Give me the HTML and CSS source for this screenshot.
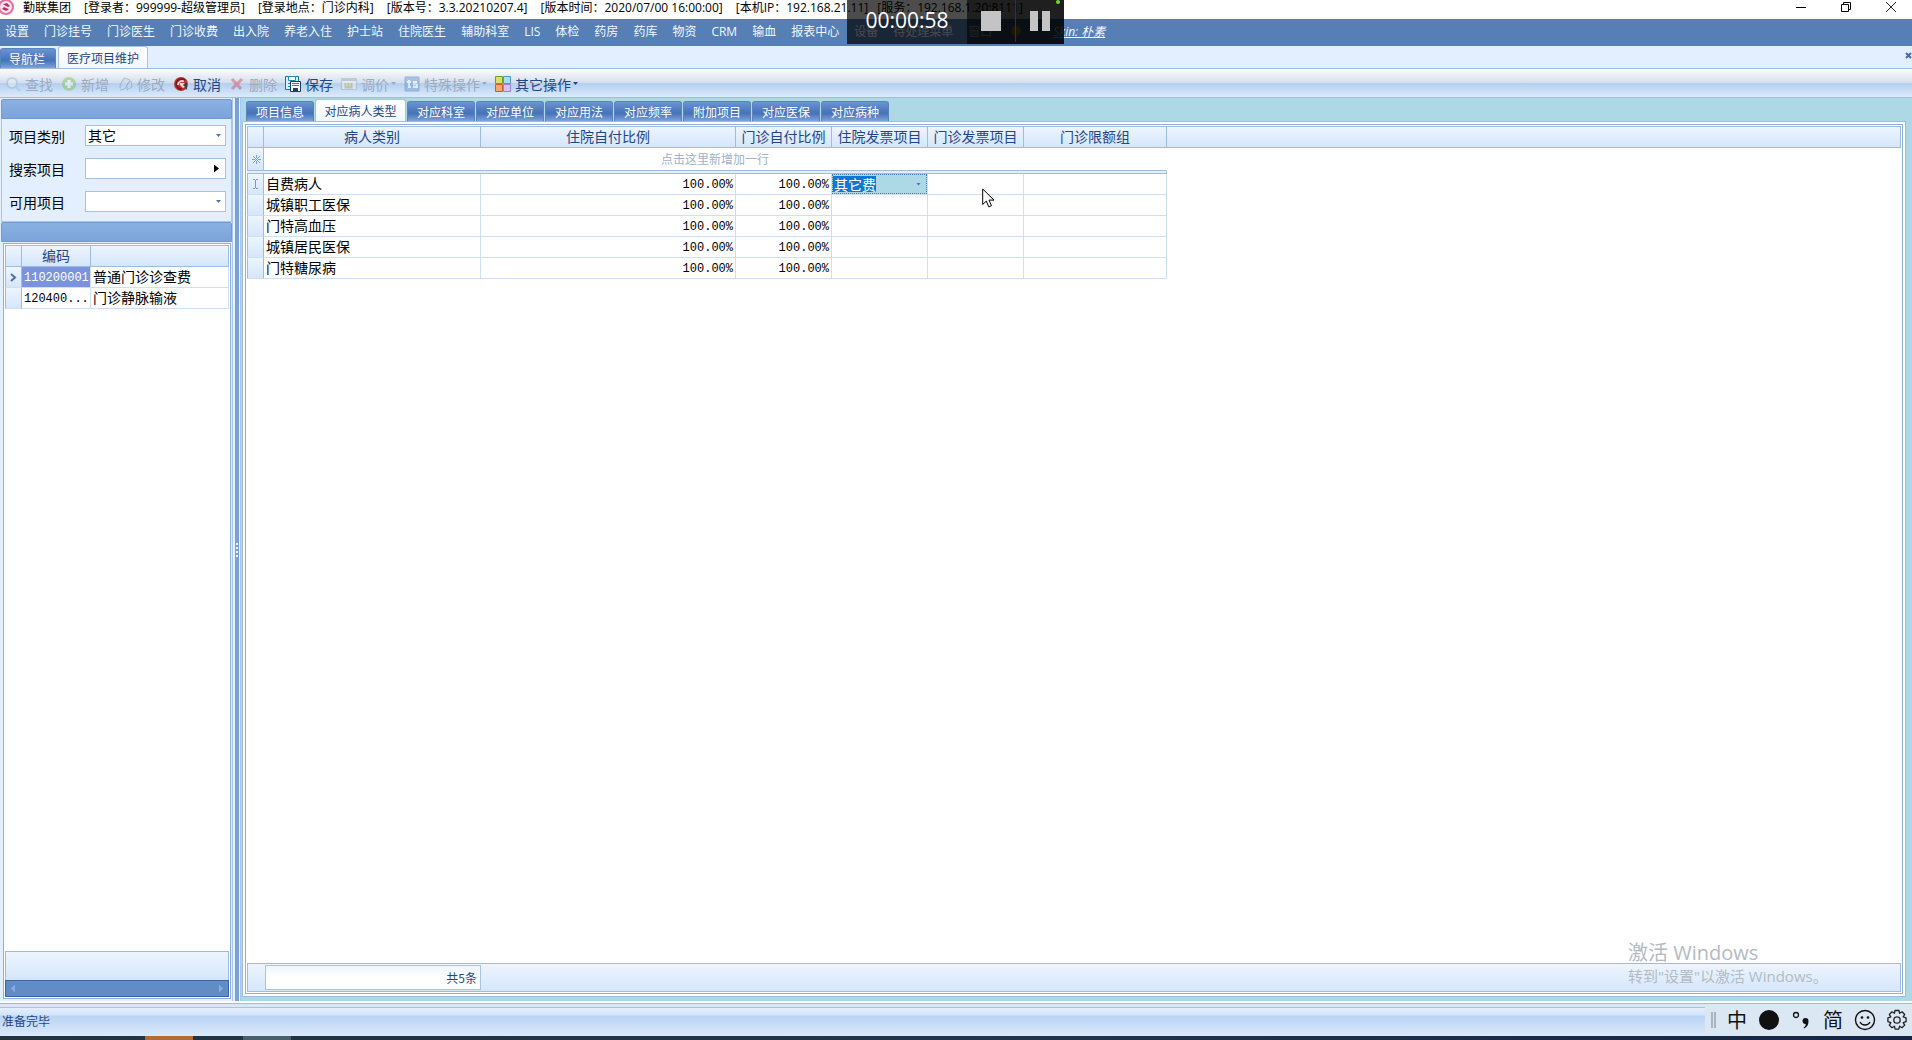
FILE: index.html
```html
<!DOCTYPE html>
<html lang="zh-CN">
<head>
<meta charset="utf-8">
<title>勤联集团</title>
<link rel="stylesheet" href="styles.css">
</head>
<body>
<header class="titlebar">
  <svg class="logo" width="14" height="19" viewBox="0 0 14 19"><circle cx="6" cy="7" r="7" fill="#fbe6ee" stroke="#e0709a" stroke-width="2"/><path d="M3 4l4-1 3 3-2 1-2-1zM9 9l-3 2-4-2 2-2 2 1z" fill="#b8306a"/></svg>
  <div class="title-text"><span>勤联集团</span><span>[登录者：999999-超级管理员]</span><span>[登录地点：门诊内科]</span><span>[版本号：3.3.20210207.4]</span><span>[版本时间：2020/07/00 16:00:00]</span><span>[本机IP：192.168.21.11]</span><span class="tight">[服务：192.168.1.20:8111]</span></div>
  <div class="window-buttons">
    <button type="button" aria-label="最小化"><svg width="12" height="12" viewBox="0 0 12 12"><path d="M1 6.500h10" stroke="#000"/></svg></button>
    <button type="button" aria-label="还原"><svg width="12" height="12" viewBox="0 0 12 12"><path d="M1.500 3.500h7v7h-7zM3.500 3.500v-2h7v7h-2" fill="none" stroke="#000"/></svg></button>
    <button type="button" aria-label="关闭"><svg width="12" height="12" viewBox="0 0 12 12"><path d="M1 1l10 10M11 1L1 11" stroke="#222"/></svg></button>
  </div>
</header>

<nav class="menubar">
  <a href="#">设置</a><a href="#">门诊挂号</a><a href="#">门诊医生</a><a href="#">门诊收费</a><a href="#">出入院</a><a href="#">养老入住</a><a href="#">护士站</a><a href="#">住院医生</a><a href="#">辅助科室</a><a href="#">LIS</a><a href="#">体检</a><a href="#">药房</a><a href="#">药库</a><a href="#">物资</a><a href="#">CRM</a><a href="#">输血</a><a href="#">报表中心</a><a href="#">设备</a><a href="#">待处理菜单</a><a href="#">窗口</a>
  <svg class="bulb" width="14" height="14" viewBox="0 0 14 14"><circle cx="7" cy="6" r="5" fill="#f0b840"/><path d="M5 11h4v2H5z" fill="#888"/></svg>
  <a class="skin" href="#">Skin: 朴素</a>
</nav>

<div class="doc-tabs">
  <button class="tab" type="button">导航栏</button>
  <button class="tab active" type="button">医疗项目维护</button>
  <button class="doc-close" type="button" aria-label="关闭页面"><svg width="7" height="7" viewBox="0 0 7 7"><path d="M1 1l5 5M6 1L1 6" stroke="#3d6cb4" stroke-width="2"/></svg></button>
</div>

<div class="toolbar">
  <button type="button" disabled><svg width="16" height="16" viewBox="0 0 16 16"><circle cx="7" cy="7" r="5" fill="#e8f1fa" stroke="#9db8d4" stroke-width="2"/><path d="M11 11l4 4" stroke="#9db8d4" stroke-width="2"/></svg>查找</button>
  <button type="button" disabled><svg width="16" height="16" viewBox="0 0 16 16"><circle cx="8" cy="8" r="7" fill="#7cc04a"/><path d="M8 4v8M4 8h8" stroke="#fff" stroke-width="3"/></svg>新增</button>
  <button type="button" disabled><svg width="16" height="16" viewBox="0 0 16 16"><path d="M3 9l4-7 4 2-4 7-4 1z" fill="#a9c9e6" stroke="#6d94bd"/><path d="M8 2l5 2-5 9-5 1M10 8l4-3 1 6-5 3z" fill="#c5d8ea" stroke="#6d94bd"/></svg>修改</button>
  <button type="button"><svg width="16" height="16" viewBox="0 0 16 16"><circle cx="8" cy="8" r="7" fill="#b8332f"/><path d="M12 4.500A5 5 0 1 0 9 13" fill="none" stroke="#7c1a1c" stroke-width="2"/><path d="M11 5.500A4 4 0 0 0 5 9" fill="none" stroke="#f3d2d0" stroke-width="2"/><path d="M7 7h7v7z" fill="#3f3f44"/><path d="M7 7h5l-2 2 2 2-2 1-3-3z" fill="#e8d8d8"/></svg>取消</button>
  <button type="button" disabled><svg width="16" height="16" viewBox="0 0 16 16"><path d="M3 3l9 10M13 3L3 13" stroke="#d6485a" stroke-width="3"/></svg>删除</button>
  <button type="button"><svg width="16" height="16" viewBox="0 0 16 16"><path d="M.5 .5h13v13h-13z" fill="#d8f0fc" stroke="#1f6cab"/><path d="M3.500 .5h7v4h-7zM3 7.500h3M3 10.500h3" fill="#fff" stroke="#1f8dc4"/><path d="M5.500 5.500h10v10h-10z" fill="#f7fcff" stroke="#123f70"/><path d="M7 7.500h7M7 9.500h7" stroke="#2b83b5"/><path d="M8 12h5v3H8z" fill="#2a3f55"/></svg>保存</button>
  <button type="button" disabled><svg width="16" height="16" viewBox="0 0 16 16"><path d="M.5 2.500h15v11H.5z" fill="#f3f3ee" stroke="#9aa8b8"/><path d="M1 4h14" stroke="#9aa8b8" stroke-width="2"/><path d="M4.500 7v4.500h3V7M7.500 11.500h3V7" stroke="#c4a850" fill="none" stroke-width="2"/></svg>调价<i class="caret"></i></button>
  <button type="button" disabled><svg width="16" height="16" viewBox="0 0 16 16"><path d="M1 1h14v14H1z" fill="#6c98cc" stroke="#4c78b0"/><path d="M5 4v7h2M3 6h4M13 6h-3v2.500h3V11H9" fill="none" stroke="#fff" stroke-width="2"/></svg>特殊操作<i class="caret"></i></button>
  <button type="button"><svg width="16" height="16" viewBox="0 0 16 16"><path d="M.5 .5h7v7h-7z" fill="#d5e26c" stroke="#7c9a23"/><path d="M8.500 .5h7v7h-7z" fill="#a9defa" stroke="#4b9bd0"/><path d="M.5 8.500h7v7h-7z" fill="#f8a66c" stroke="#d35b27"/><path d="M8.500 8.500h7v7h-7z" fill="#d3c3f4" stroke="#9a84cf"/></svg>其它操作<i class="caret"></i></button>
</div>

<div class="workspace">
  <aside class="sidebar">
    <div class="group-head"></div>
    <form class="filters">
      <label for="category">项目类别</label>
      <div class="field"><select id="category"><option>其它</option></select><i class="caret"></i></div>
      <label for="search">搜索项目</label>
      <div class="field"><input id="search" type="text"><i class="play"></i></div>
      <label for="usable">可用项目</label>
      <div class="field"><select id="usable"><option></option></select><i class="caret"></i></div>
    </form>
    <div class="group-head"></div>
    <div class="grid-frame">
      <table class="grid items">
        <colgroup><col class="c-mark"><col class="c-code"><col></colgroup>
        <thead><tr><th></th><th>编码</th><th></th></tr></thead>
        <tbody>
          <tr><td class="mark"><svg width="7" height="9" viewBox="0 0 7 9"><path d="M1 1l4 3.500L1 8" fill="none" stroke="#4f70a8" stroke-width="2"/></svg></td><td class="code selected">110200001</td><td>普通门诊诊查费</td></tr>
          <tr><td class="mark"></td><td class="code">120400...</td><td>门诊静脉输液</td></tr>
        </tbody>
      </table>
      <div class="items-foot"></div>
      <div class="hscroll"><i></i><i class="right"></i></div>
    </div>
  </aside>

  <div class="splitter"><div class="grip"><i></i><i></i><i></i><i></i></div></div>

  <main class="detail">
    <div class="page-tabs">
      <button class="tab" type="button">项目信息</button>
      <button class="tab active" type="button">对应病人类型</button>
      <button class="tab" type="button">对应科室</button>
      <button class="tab" type="button">对应单位</button>
      <button class="tab" type="button">对应用法</button>
      <button class="tab" type="button">对应频率</button>
      <button class="tab" type="button">附加项目</button>
      <button class="tab" type="button">对应医保</button>
      <button class="tab" type="button">对应病种</button>
    </div>
    <div class="page">
      <div class="grid-frame">
        <table class="grid patients">
          <colgroup><col class="c-mark"><col class="c-type"><col class="c-inrate"><col class="c-rate"><col class="c-invoice"><col class="c-invoice"><col class="c-limit"><col></colgroup>
          <thead>
            <tr><th></th><th>病人类别</th><th>住院自付比例</th><th>门诊自付比例</th><th>住院发票项目</th><th>门诊发票项目</th><th>门诊限额组</th><th></th></tr>
          </thead>
          <tbody>
            <tr class="new-row"><td class="mark"><svg width="9" height="9" viewBox="0 0 9 9"><path d="M4.500 0v3M4.500 6v3M0 4.500h3M6 4.500h3M1 1l7 7M8 1L1 8" stroke="#7f9fcd"/></svg></td><td colspan="6">点击这里新增加一行</td><td class="blank"></td></tr>
            <tr class="divider"><td colspan="7"></td><td class="blank"></td></tr>
            <tr><td class="mark"><svg width="7" height="10" viewBox="0 0 7 10"><path d="M1 .5h2M4 .5h2M3.500 1v8M1 9.500h2M4 9.500h2" stroke="#7a97c4"/></svg></td><td>自费病人</td><td class="num">100.00%</td><td class="num">100.00%</td><td class="editing"><div class="editor"><input type="text" value="其它费" aria-label="住院发票项目"><i class="caret"></i></div></td><td></td><td></td><td class="blank"></td></tr>
            <tr><td class="mark"></td><td>城镇职工医保</td><td class="num">100.00%</td><td class="num">100.00%</td><td></td><td></td><td></td><td class="blank"></td></tr>
            <tr><td class="mark"></td><td>门特高血压</td><td class="num">100.00%</td><td class="num">100.00%</td><td></td><td></td><td></td><td class="blank"></td></tr>
            <tr><td class="mark"></td><td>城镇居民医保</td><td class="num">100.00%</td><td class="num">100.00%</td><td></td><td></td><td></td><td class="blank"></td></tr>
            <tr><td class="mark"></td><td>门特糖尿病</td><td class="num">100.00%</td><td class="num">100.00%</td><td></td><td></td><td></td><td class="blank"></td></tr>
          </tbody>
        </table>
        <div class="summary"><div class="count">共5条</div></div>
      </div>
    </div>
  </main>
</div>

<footer class="statusbar">准备完毕</footer>
<div class="taskbar"><i class="task-orange"></i><i class="task-grey"></i></div>

<div class="recorder">
  <div class="timer">00:00:58</div>
  <div class="controls">
    <button type="button" aria-label="停止"><svg width="20" height="20" viewBox="0 0 20 20"><path d="M0 0h20v20H0z" fill="#c4c4c4"/></svg></button>
    <button type="button" aria-label="暂停"><svg width="20" height="20" viewBox="0 0 20 20"><path d="M0 0h8v20H0zM12 0h8v20h-8z" fill="#c4c4c4"/></svg></button>
  </div>
  <i class="live"></i>
</div>

<svg class="pointer" width="13" height="20" viewBox="0 0 13 20"><path d="M.7 1v15.500l3.600-3.400 2.500 5.800 2.700-1.200-2.500-5.600h5z" fill="#fff" stroke="#000"/></svg>

<div class="watermark"><p class="wm-title">激活 Windows</p><p class="wm-note">转到"设置"以激活 Windows。</p></div>

<div class="ime">
  <i class="ime-grip"></i>
  <span>中</span>
  <svg width="22" height="22" viewBox="0 0 22 22"><circle cx="11" cy="11" r="10" fill="#111"/></svg>
  <svg width="22" height="22" viewBox="0 0 22 22"><circle cx="6" cy="6" r="2.500" fill="none" stroke="#111" stroke-width="1.300"/><path d="M12.500 12a3 3 0 0 1 6 0c0 4-1.500 6-4.500 7.500l-.5-.8c1.500-1 2.300-2.300 2.200-3.800-2 .2-3.200-1-3.200-2.900z" fill="#111"/></svg>
  <span>简</span>
  <svg width="22" height="22" viewBox="0 0 22 22"><circle cx="11" cy="11" r="9.500" fill="none" stroke="#111" stroke-width="1.400"/><circle cx="8" cy="8.500" r="1.300" fill="#111"/><circle cx="14" cy="8.500" r="1.300" fill="#111"/><path d="M6 13c2 4 8 4 10 0" fill="none" stroke="#111" stroke-width="1.300"/></svg>
  <svg width="22" height="22" viewBox="0 0 22 22"><path d="M9 1.500h4l.6 2.800 2.500-1.500 2.600 2.700-1.500 2.400 2.900.9v3.900l-2.900.9 1.500 2.500-2.700 2.600-2.400-1.500-.8 2.900H9.200l-.8-2.900L6 18.700l-2.700-2.600 1.500-2.500-2.900-.9V8.800l2.900-.9-1.500-2.400L6 2.800l2.400 1.500z" fill="none" stroke="#222" stroke-width="1.300" stroke-linejoin="round"/><circle cx="11" cy="11" r="3.200" fill="none" stroke="#222" stroke-width="1.300"/></svg>
</div>
</body>
</html>
```
FILE: styles.css
```css
:root {
  --line: #9ebbe0;
  --row-line: #cddff2;
  --ink: #1f4788;
  --pale: #e3efff;
  --sans: "Open Sans", "Noto Sans CJK SC", sans-serif;
  --cjk: "Noto Sans CJK SC", sans-serif;
  --mono: "Liberation Mono", "Noto Sans CJK SC", monospace;
}

* { box-sizing: border-box; }

body {
  margin: 0;
  height: 100vh;
  display: flex;
  flex-direction: column;
  overflow: hidden;
  background: var(--pale);
  font: 12px/16px var(--sans);
}

button { border: 0; padding: 0; background: none; font: inherit; color: inherit; }
svg { display: block; flex: none; }
i { display: block; flex: none; }
p { margin: 0; }

.caret {
  width: 5px;
  height: 3px;
  background: currentColor;
  clip-path: polygon(0 0, 100% 0, 50% 100%);
}

/* Title bar and menu */
.titlebar {
  display: flex;
  height: 19px;
  background: #fff;
  color: #000;
  overflow: hidden;
}
.logo { margin-right: 9px; }
.title-text { flex: 1; display: flex; gap: 13px; white-space: nowrap; }
.title-text .tight { margin-left: -4px; }
.window-buttons { display: flex; gap: 33px; padding-right: 15px; align-items: center; height: 13px; }

.menubar {
  display: flex;
  align-items: center;
  gap: 15px;
  height: 27px;
  padding: 0 5px 2px;
  background: #557fb5;
  color: #f2f7ff;
  white-space: nowrap;
}
.menubar a { color: inherit; text-decoration: none; }
.menubar .bulb { margin-left: 2px; }
.menubar .skin { margin-left: 15px; font-style: italic; text-decoration: underline; }

/* Tabs */
.tab {
  border: 1px solid #5a83c2;
  border-bottom: 0;
  border-radius: 3px 3px 0 0;
  background: linear-gradient(#6c94d2, #4c77bd 50%, #4672b8 60%, #7ea3dc);
  color: #fff;
  font: 12px/16px var(--cjk);
}
.tab.active { background: linear-gradient(#fff, #f2f7fe); border-color: #a5c3ec; color: var(--ink); }

.doc-tabs {
  display: flex;
  align-items: flex-end;
  gap: 2px;
  height: 23px;
  border-bottom: 1px solid var(--line);
}
.doc-tabs .tab { height: 20px; padding: 0 10px 0 8px; }
.doc-tabs .tab.active { height: 22px; padding: 0 8px; }
.doc-close { margin-left: auto; height: 22px; padding-bottom: 4px; overflow: hidden; }

.toolbar {
  display: flex;
  align-items: center;
  gap: 8px;
  height: 29px;
  padding: 1px 5px 0;
  border-bottom: 1px solid var(--line);
  background: linear-gradient(#fcfcfd, #d3deec 50%, #b5cfee 52%, #dcebfd);
  color: var(--ink);
  font: 14px/20px var(--cjk);
}
.toolbar button { display: flex; align-items: center; gap: 4px; white-space: nowrap; }
.toolbar button:disabled { color: #9aabc3; }
.toolbar button:disabled svg { opacity: .45; }
.toolbar .caret { margin-left: -2px; }

/* Work area */
.workspace { flex: 1; min-height: 0; display: flex; background: #fff; padding-bottom: 2px; }

.sidebar {
  width: 232px;
  display: flex;
  flex-direction: column;
  padding: 1px 0 1px 1px;
  background: var(--pale);
}
.group-head {
  height: 20px;
  border: 1px solid #6f9bd3;
  border-radius: 2px 2px 0 0;
  background: linear-gradient(#8cb0e2, #7ba4da);
}
.filters {
  display: grid;
  grid-template-columns: 76px 1fr;
  align-items: center;
  row-gap: 12px;
  margin: 0;
  padding: 6px 5px 9px 7px;
  border: 1px solid #a9c6ec;
  border-top: 0;
  color: #000;
  font: 14px/20px var(--cjk);
}
.field { display: grid; align-items: center; color: #4976b8; }
.field > * { grid-area: 1 / 1; }
.field input, .field select {
  appearance: none;
  width: 100%;
  height: 21px;
  border: 1px solid #a6c1e6;
  border-radius: 0;
  background: #fff;
  padding: 0 2px;
  color: #000;
  font: 14px/19px var(--cjk);
}
.field i { justify-self: end; margin-right: 5px; pointer-events: none; }
.field .play { width: 5px; height: 8px; margin-right: 7px; background: #000; clip-path: polygon(0 0, 100% 50%, 0 100%); }

.grid-frame {
  flex: 1;
  min-height: 0;
  display: flex;
  flex-direction: column;
  border: 1px solid #8fb0dc;
  padding: 1px;
  background: #fff;
}
.sidebar .grid-frame { margin: 1px 1px 1px 2px; }

.splitter {
  width: 9px;
  display: flex;
  align-items: center;
  border: solid #a9c6ec;
  border-width: 0 1px;
  background: linear-gradient(90deg, #e8f1fe 2px, #7ba0d6 2px 6px, #e8f1fe 6px);
}
.grip { display: grid; gap: 2px; margin-left: 3px; }
.grip i { width: 2px; height: 2px; background: #eef5ff; }

.detail { flex: 1; min-width: 0; display: flex; flex-direction: column; background: #add8e6; }
.page-tabs { display: flex; align-items: flex-end; gap: 1px; height: 23px; padding-left: 5px; }
.page-tabs .tab { width: 68px; height: 20px; }
.page-tabs .tab.active { width: 91px; height: 22px; }
.page {
  flex: 1;
  min-height: 0;
  display: flex;
  margin: 0 6px 4px 1px;
  padding: 2px;
  border: 1px solid var(--line);
  background: #fff;
}

/* Grids */
.grid { width: 100%; table-layout: fixed; border-collapse: separate; border-spacing: 0; font: 14px/18px var(--cjk); color: #000; }
.grid th, .grid td { padding: 0 2px 2px; white-space: nowrap; overflow: hidden; }
.grid th {
  height: 22px;
  border: solid var(--line);
  border-width: 1px 1px 1px 0;
  background: linear-gradient(#edf5ff, #d5e6fb);
  color: var(--ink);
  font-weight: 400;
}
.grid th:first-child, .grid .mark { border-left: 1px solid var(--line); }
.grid td { height: 21px; border: solid var(--row-line); border-width: 0 1px 1px 0; }
.grid .mark { border-right-color: var(--line); background: linear-gradient(#edf5ff, #d5e6fb); padding: 0 4px; }
.grid td.blank { border: 0; }
.c-mark { width: 17px; }
.c-code { width: 69px; }
.c-type { width: 217px; }
.c-inrate { width: 255px; }
.c-rate { width: 96px; }
.c-invoice { width: 96px; }
.c-limit { width: 143px; }

.grid .code, .grid .num { padding: 2px 2px 0; font: 12px/18px var(--mono); }
.grid .selected { background: #7b93dc; color: #fff; }
.grid .num { text-align: right; }
.grid .new-row td { height: 23px; padding-bottom: 0; text-align: center; color: #9fb2ca; font-size: 12px; border-color: var(--line); border-right-color: transparent; }
.grid .new-row .mark { border-right-color: var(--line); }
.grid .divider td { height: 3px; background: var(--pale); border-color: var(--line); padding: 0; }
.grid .divider .blank { background: none; }

.grid .editing { padding: 0; }
.editor { display: flex; align-items: center; height: 20px; padding-right: 5px; border: 1px dotted #4777a8; background: #add8e6; color: #4976b8; }
.editor input {
  flex: 1;
  min-width: 0;
  height: 16px;
  border: 0;
  border-radius: 0;
  padding: 0 1px;
  background: linear-gradient(#0a78d7, #0a78d7) 0 0 / 43px 16px no-repeat;
  color: #fff;
  font: 14px/16px var(--cjk);
}

.items-foot { height: 29px; margin: auto 0 0; border: 1px solid var(--line); border-bottom: 0; background: linear-gradient(#edf5ff, #d5e6fb); }
.hscroll { display: flex; justify-content: space-between; align-items: center; height: 17px; padding: 0 5px; border: 1px solid #3a66a8; background: #628cc5; }
.hscroll i { width: 4px; height: 8px; background: #86abdf; clip-path: polygon(100% 0, 100% 100%, 0 50%); }
.hscroll .right { clip-path: polygon(0 0, 100% 50%, 0 100%); }

.summary { display: flex; align-items: center; height: 29px; margin-top: auto; padding-left: 17px; border: 1px solid var(--line); background: linear-gradient(#edf5ff, #d5e6fb); }
.count { width: 216px; height: 25px; padding-right: 3px; border: 1px solid #a9c3e2; background: linear-gradient(#edf5ff, #fff 50%); color: var(--ink); text-align: right; font: 12px/23px var(--cjk); }

/* Bottom bars */
.statusbar {
  height: 33px;
  padding: 8px 2px;
  border-top: 1px solid var(--line);
  background: linear-gradient(#d9e6f7 3px, #a9c3e6 3px 4px, #e3eefc 4px, #d3e4fa 11px, #b9d4f4 12px, #dbe9fb);
  color: var(--ink);
  font: 12px/18px var(--cjk);
}
.taskbar { display: flex; gap: 50px; height: 4px; padding-left: 145px; background: linear-gradient(90deg, #22333f, #22354a 50%, #172544); }
.taskbar i { width: 48px; }
.task-orange { background: #b06c34; }
.task-grey { background: #47606a; }

/* Floating layers */
.recorder { position: absolute; top: 0; left: 847px; display: flex; height: 44px; }
.timer { width: 120px; padding-top: 6px; background: rgba(0, 0, 0, .7); color: #fff; text-align: center; font: 21px/28px var(--sans); }
.controls { display: flex; background: rgba(0, 0, 0, .88); }
.controls button { display: grid; place-items: center; width: 48px; height: 42px; }
.controls button + button { width: 49px; border-left: 1px solid #333; }
.live { position: absolute; top: 0; right: 4px; width: 4px; height: 4px; border-radius: 2px; background: #6fdc1e; }

.pointer { position: absolute; left: 982px; top: 188px; }

.watermark { position: absolute; right: 86px; bottom: 54px; width: 198px; color: #b4bac2; white-space: nowrap; }
.wm-title { font: 20px/26px var(--sans); }
.wm-note { font: 15px/20px var(--sans); }

.ime { position: absolute; right: 0; bottom: 4px; display: flex; align-items: center; gap: 10px; height: 32px; padding: 0 4px 0 6px; background: #dce7f4; color: #111; font: 20px/30px var(--cjk); }
.ime span { width: 22px; text-align: center; }
.ime-grip { width: 5px; height: 16px; border: solid #aab4c0; border-width: 0 2px; }
```
